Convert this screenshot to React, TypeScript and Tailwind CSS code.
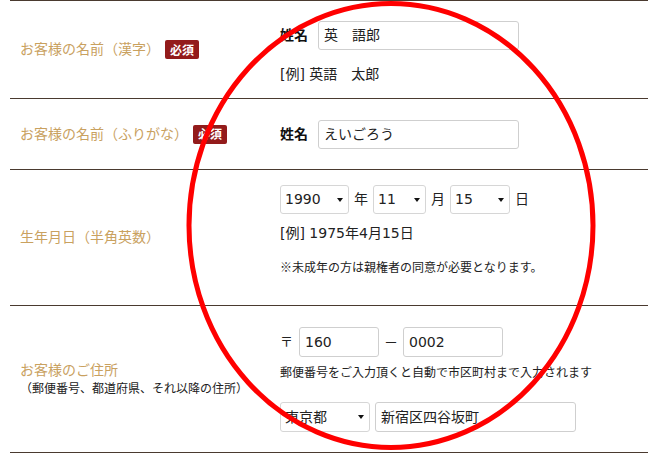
import React from "react";

const FONT = { fontFamily: '"DejaVu Sans", "Noto Sans CJK JP", "Noto Sans", sans-serif' };

function Badge() {
  return (
    <span
      className="ml-[5px] inline-flex h-[19px] w-[34px] items-center justify-center rounded-[2px] bg-[#931b1b] text-[12px] font-bold leading-none text-white"
      style={{ fontFamily: '"Noto Sans CJK JP", sans-serif' }}
    >
      必須
    </span>
  );
}

function TextBox({ value, w }: { value: string; w: string }) {
  return (
    <div className={`flex h-[29px] items-center rounded-[3px] border border-[#cfcfcf] bg-white pl-[5px] text-[14px] text-[#222] ${w}`}>
      {value}
    </div>
  );
}

function SelectBox({ value, w, h = "h-[29px]" }: { value: string; w: string; h?: string }) {
  return (
    <div className={`flex items-center justify-between rounded-[3px] border border-[#d6d6d6] bg-white pl-[4px] pr-[5px] text-[14px] text-[#222] ${w} ${h}`}>
      <span>{value}</span>
      <svg width="6" height="4" viewBox="0 0 6 4">
        <path d="M0 0 L6 0 L3 4 Z" fill="#111" />
      </svg>
    </div>
  );
}

export default function App() {
  return (
    <div className="relative h-[461px] w-[648px] overflow-hidden bg-white text-[#333]" style={FONT}>
      <div className="ml-[10px]">
        {/* Row 1 */}
        <div className="flex h-[98px] border-t border-[#4a3a2f]">
          <div className="flex w-[270px] items-center pl-[10px] text-[14px] text-[#c9a15f]">
            お客様の名前（漢字）
            <Badge />
          </div>
          <div className="flex flex-col pt-[20px]">
            <div className="flex items-center">
              <span className="w-[38px] text-[14px] font-bold text-[#111]">姓名</span>
              <TextBox value="英　語郎" w="w-[201px]" />
            </div>
            <div className="mt-[14px] text-[14px] leading-[20px] text-[#222]">[例] 英語　太郎</div>
          </div>
        </div>
        {/* Row 2 */}
        <div className="flex h-[71px] border-t border-[#4a3a2f]">
          <div className="flex w-[270px] items-center pl-[10px] text-[14px] text-[#c9a15f]">
            お客様の名前（ふりがな）
            <Badge />
          </div>
          <div className="flex items-center">
            <span className="w-[38px] text-[14px] font-bold text-[#111]">姓名</span>
            <TextBox value="えいごろう" w="w-[201px]" />
          </div>
        </div>
        {/* Row 3 */}
        <div className="flex h-[136px] border-t border-[#4a3a2f]">
          <div className="flex w-[270px] items-center pl-[10px] text-[14px] text-[#c9a15f]">
            生年月日（半角英数）
          </div>
          <div className="flex flex-col pt-[15px]">
            <div className="flex items-center text-[14px] text-[#222]">
              <SelectBox value="1990" w="w-[69px]" />
              <span className="mx-[5px]">年</span>
              <SelectBox value="11" w="w-[53px]" />
              <span className="mx-[5px]">月</span>
              <SelectBox value="15" w="w-[60px]" />
              <span className="ml-[5px]">日</span>
            </div>
            <div className="mt-[9px] text-[14px] leading-[20px] text-[#222]">[例] 1975年4月15日</div>
            <div className="mt-[15px] text-[12px] leading-[18px] text-[#222]" style={{ fontFamily: '"Noto Sans CJK JP", sans-serif' }}>
              ※未成年の方は親権者の同意が必要となります。
            </div>
          </div>
        </div>
        {/* Row 4 */}
        <div className="flex h-[148px] border-y border-[#4a3a2f]">
          <div className="flex w-[270px] flex-col justify-center pl-[10px]">
            <div className="text-[14px] leading-[20px] text-[#c9a15f]">お客様のご住所</div>
            <div className="text-[12px] leading-[18px] text-[#222]">（郵便番号、都道府県、それ以降の住所）</div>
          </div>
          <div className="flex flex-col pt-[21px]">
            <div className="flex items-center text-[14px] text-[#222]">
              <span className="w-[19px] text-[13px]">〒</span>
              <TextBox value="160" w="w-[80px] h-[30px]" />
              <span className="w-[24px] text-center">－</span>
              <TextBox value="0002" w="w-[100px] h-[30px]" />
            </div>
            <div className="mt-[7px] text-[12px] leading-[18px] text-[#222]">郵便番号をご入力頂くと自動で市区町村まで入力されます</div>
            <div className="mt-[20px] flex items-center">
              <SelectBox value="東京都" w="w-[90px]" h="h-[30px]" />
              <div className="ml-[5px]">
                <TextBox value="新宿区四谷坂町" w="w-[201px] h-[30px]" />
              </div>
            </div>
          </div>
        </div>
      </div>
      <svg className="pointer-events-none absolute left-0 top-0" width="648" height="461">
        <ellipse cx="391" cy="225.5" rx="202" ry="222" fill="none" stroke="#ff0000" strokeWidth="5" />
      </svg>
    </div>
  );
}
